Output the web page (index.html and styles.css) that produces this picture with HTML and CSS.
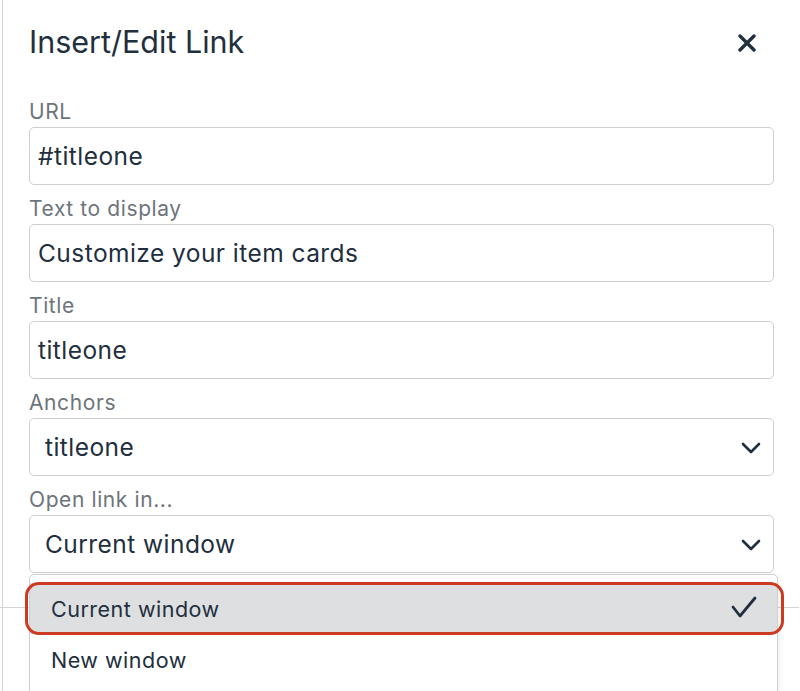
FILE: index.html
```html
<!DOCTYPE html>
<html lang="en">
<head>
  <meta charset="UTF-8">
  <meta name="viewport" content="width=device-width, initial-scale=1.0">
  <title>Insert/Edit Link</title>
<link rel="stylesheet" href="styles.css">
</head>
<body>
  <div class="dialog">
    <div class="dialog-header">
      <h1 class="dialog-title">Insert/Edit Link</h1>
      <button class="close-btn" aria-label="Close">
        <svg width="18" height="18" viewBox="0 0 18 18"><path d="M2 2L16 16M16 2L2 16" stroke="#222f3e" stroke-width="3.4" stroke-linecap="round"/></svg>
      </button>
    </div>
    <div class="dialog-body">
      <div class="field">
        <label>URL</label>
        <div class="input">#titleone</div>
      </div>
      <div class="field">
        <label>Text to display</label>
        <div class="input">Customize your item cards</div>
      </div>
      <div class="field">
        <label>Title</label>
        <div class="input">titleone</div>
      </div>
      <div class="field">
        <label>Anchors</label>
        <div class="input select">titleone
          <svg class="chevron" width="20" height="12" viewBox="0 0 20 12"><path d="M2 2L10 10L18 2" fill="none" stroke="#222f3e" stroke-width="2.6" stroke-linecap="round" stroke-linejoin="round"/></svg>
        </div>
      </div>
      <div class="field">
        <label>Open link in...</label>
        <div class="input select">Current window
          <svg class="chevron" width="20" height="12" viewBox="0 0 20 12"><path d="M2 2L10 10L18 2" fill="none" stroke="#222f3e" stroke-width="2.6" stroke-linecap="round" stroke-linejoin="round"/></svg>
        </div>
      </div>
    </div>
    <div class="dialog-footer"></div>

    <div class="menu">
      <div class="menu-item active">Current window
        <svg class="check" width="28" height="24" viewBox="0 0 28 24"><path d="M3 12L10 21L25 3" fill="none" stroke="#222f3e" stroke-width="2.8" stroke-linecap="round" stroke-linejoin="round"/></svg>
      </div>
      <div class="menu-item">New window</div>
    </div>
  </div>
</body>
</html>
```

FILE: styles.css
```css
html,body{margin:0;padding:0;background:#fff;overflow:hidden;}
body{font-family:Inter,"Noto Sans",sans-serif;color:#222f3e;}

.dialog{margin-left:2px;width:797px;height:691px;border-left:1px solid #d4d4d4;position:relative;box-sizing:border-box;}

.dialog-header{display:flex;align-items:center;justify-content:space-between;padding:22px 43px 0 26px;height:40px;}
.dialog-title{margin:0;font-size:30.5px;line-height:40px;font-weight:400;}
.close-btn{border:0;background:none;padding:0;width:18px;height:18px;display:flex;margin-top:2px;}

.dialog-body{padding:38px 25px 0 26px;display:flex;flex-direction:column;gap:12.5px;}
.field{display:flex;flex-direction:column;}
.field label{font-size:21px;line-height:24px;color:#6e747b;margin-bottom:2.5px;letter-spacing:0.6px;}
.input{height:58px;box-sizing:border-box;border:1px solid #cfcfcf;border-radius:5px;padding:0 0 0 8px;display:flex;align-items:center;font-size:24.5px;letter-spacing:0.45px;}
.select{padding-left:15px;position:relative;}
.chevron{position:absolute;right:12px;top:23px;}

.dialog-footer{position:absolute;left:-3px;right:0;top:607px;border-top:1px solid #d4d4d4;}

.menu{position:absolute;left:26px;top:574px;width:749px;height:140px;box-sizing:border-box;border:1px solid #d0d0d0;border-radius:5px;background:#fff;padding-top:8px;box-shadow:2px 2px 6px rgba(0,0,0,0.06);}
.menu-item{height:51px;display:flex;align-items:center;padding-left:21px;font-size:21.5px;letter-spacing:0.5px;position:relative;}
.menu-item.active{background:#dedfe1;}
.menu-item.active::after{content:"";position:absolute;left:-5px;right:-7px;top:-1px;bottom:-1px;border:3px solid #cc3a22;border-radius:14px;}
.check{position:absolute;right:19px;top:12px;}
```
